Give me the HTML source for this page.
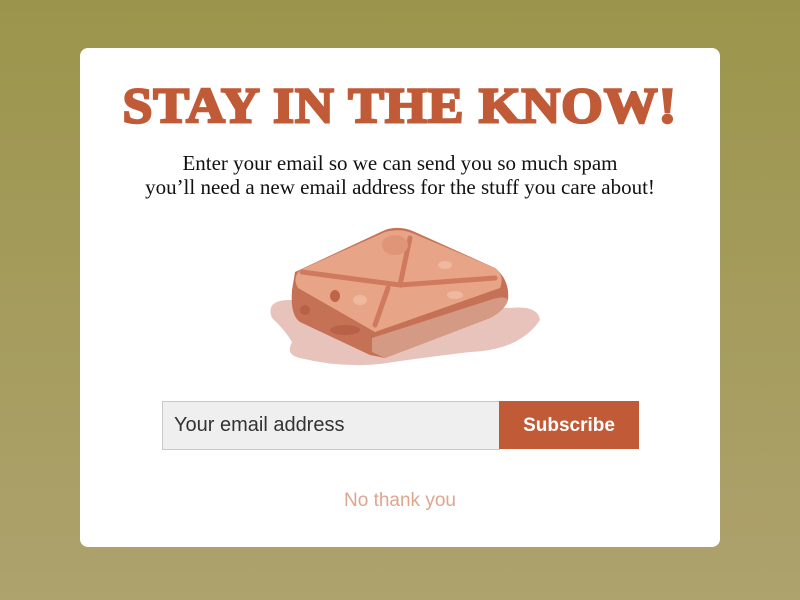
<!DOCTYPE html>
<html><head><style>
html,body{margin:0;width:800px;height:600px;overflow:hidden}
body{background:linear-gradient(#9b954c,#aea26d);position:relative;font-family:"Liberation Sans",sans-serif}
.card{position:absolute;left:80px;top:48px;width:640px;height:499px;background:#fff;border-radius:8px}
h1{position:absolute;left:0;width:640px;top:29px;margin:0;text-align:center;font-family:"Liberation Serif",serif;font-weight:900;font-size:50px;line-height:56px;color:#c05a37;letter-spacing:1px;transform:scaleX(1.07);-webkit-text-stroke:2.5px #c05a37}
p{position:absolute;left:0;width:640px;top:103px;margin:0;text-align:center;font-family:"Liberation Serif",serif;font-size:21px;line-height:24px;color:#111}
.inp{position:absolute;left:82px;top:353px;background:#efefef;border:1px solid #c8c8c8;box-sizing:border-box;width:338px;height:49px;font-size:20px;color:#333;padding:12px 0 0 11px}
.btn{position:absolute;left:419px;top:353px;width:140px;height:48px;background:#c05a37;color:#fff;font-weight:bold;font-size:19px;text-align:center;line-height:50px}
.no{position:absolute;left:0;width:640px;top:442px;text-align:center;color:#e0a58f;font-size:19px}
</style></head><body>
<div class="card">
<h1>STAY IN THE KNOW!</h1>
<p>Enter your email so we can send you so much spam<br>you’ll need a new email address for the stuff you care about!</p>
<svg style="position:absolute;left:180px;top:172px" width="290" height="160" viewBox="260 220 290 160">
<path d="M290 300 Q265 300 272 318 Q285 330 292 342 Q285 355 300 358 Q340 368 380 364 Q420 358 470 352 Q520 350 540 320 Q538 305 510 308 Z" fill="#e7c3bc"/>
<path d="M295 272 L385 230 Q400 225 415 232 L495 268 Q510 280 508 300 Q505 310 490 318 L385 358 L370 355 L300 322 Q290 315 292 290 Z" fill="#c57156"/>
<path d="M372 338 L490 300 Q505 295 508 300 Q505 310 490 318 L385 358 L372 352 Z" fill="#d59a84"/>
<path d="M300 270 L385 232 Q400 228 412 233 L495 268 Q505 275 500 288 L375 332 L298 288 Q292 278 300 270 Z" fill="#e7a486"/>
<path d="M302 272 L400 285 L410 238 M400 285 L495 278 M388 288 L375 325" stroke="#cf7a5f" stroke-width="5" fill="none" stroke-linecap="round"/>
<ellipse cx="395" cy="245" rx="13" ry="10" fill="#e09478"/>
<ellipse cx="335" cy="296" rx="5" ry="6" fill="#c06448"/>
<ellipse cx="360" cy="300" rx="7" ry="5" fill="#efb9a0"/>
<ellipse cx="455" cy="295" rx="8" ry="4" fill="#efb9a0"/>
<ellipse cx="445" cy="265" rx="7" ry="4" fill="#efb9a0"/>
<ellipse cx="345" cy="330" rx="15" ry="5" fill="#b86048"/>
<ellipse cx="305" cy="310" rx="5" ry="5" fill="#b86048"/>
</svg>
<div class="inp">Your email address</div>
<div class="btn">Subscribe</div>
<div class="no">No thank you</div>
</div>
</body></html>
